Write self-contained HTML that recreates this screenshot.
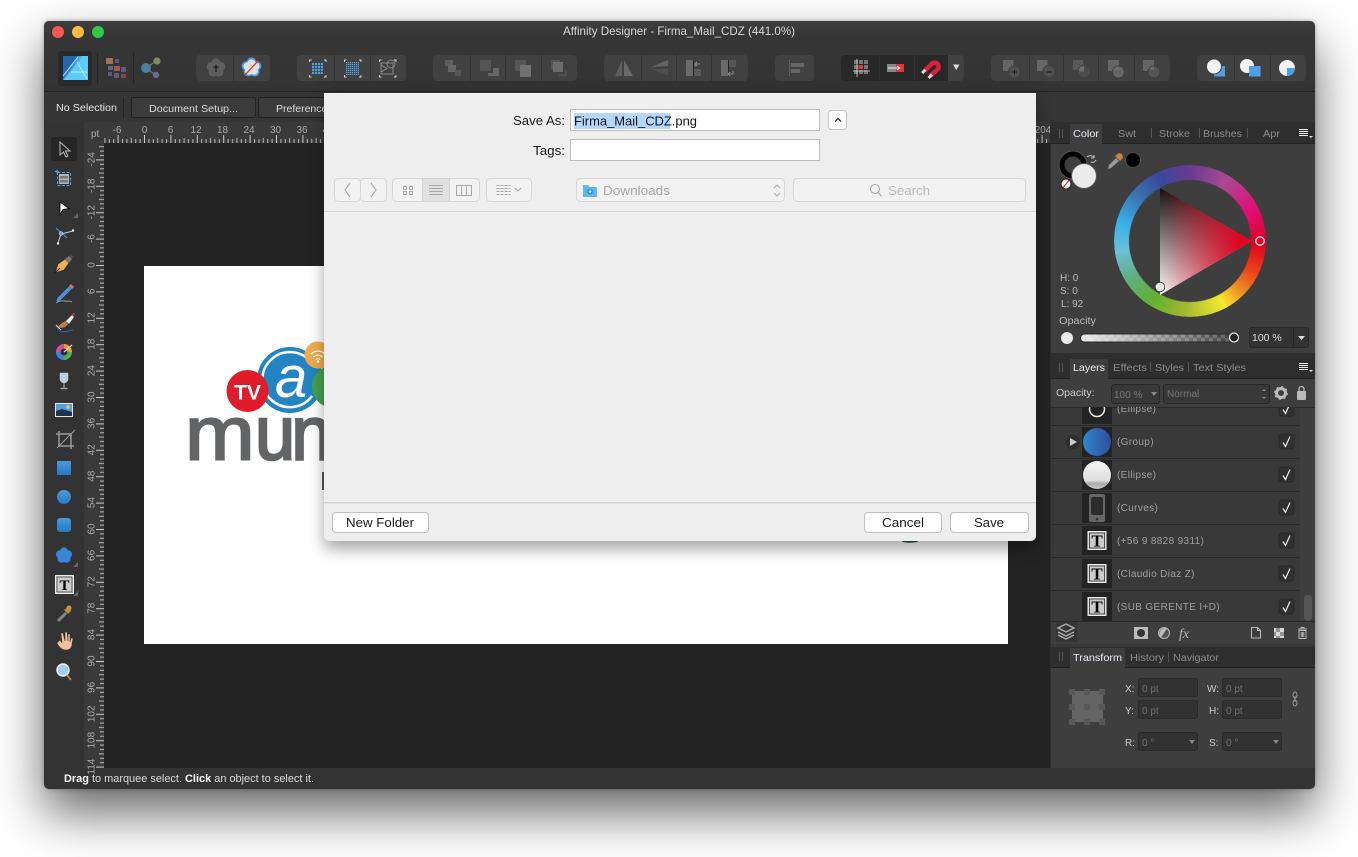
<!DOCTYPE html>
<html><head><meta charset="utf-8"><title>Affinity Designer</title>
<style>
html,body{margin:0;padding:0;background:#fff;width:1358px;height:857px;overflow:hidden}
#shadow{position:absolute;left:44px;top:21px;width:1271px;height:768px;border-radius:5px;box-shadow:0 24px 50px rgba(0,0,0,.6),0 0 5px rgba(0,0,0,.3)}
svg{position:absolute;left:0;top:0}
text{font-family:"Liberation Sans",sans-serif}
#wheel{position:absolute;left:1114px;top:165px;width:152px;height:152px;border-radius:50%;
background:conic-gradient(from 0deg,#6a3a90 0deg,#a84a92 30deg,#e0107a 62deg,#e3001e 92deg,#e8401a 115deg,#f09020 135deg,#f5e830 152deg,#a0b830 185deg,#62b030 212deg,#60b088 240deg,#6cc0d8 262deg,#38b0e8 285deg,#3a70b0 312deg,#38489a 335deg,#6a3a90 360deg);
-webkit-mask:radial-gradient(circle,transparent 60.5px,#000 61.5px);mask:radial-gradient(circle,transparent 60.5px,#000 61.5px)}
</style></head><body>
<div id="shadow"></div>
<svg width="1358" height="857" viewBox="0 0 1358 857" xmlns="http://www.w3.org/2000/svg">
<defs>
<pattern id="hr" x="144" y="135" width="26.4" height="8" patternUnits="userSpaceOnUse">
<rect x="0" y="0" width="1" height="8" fill="#ccc"/><rect x="4.4" y="4" width="1" height="4" fill="#bbb"/><rect x="8.8" y="4" width="1" height="4" fill="#bbb"/><rect x="13.2" y="3" width="1" height="5" fill="#bbb"/><rect x="17.6" y="4" width="1" height="4" fill="#bbb"/><rect x="22" y="4" width="1" height="4" fill="#bbb"/>
</pattern>
<pattern id="vr" x="96" y="265" width="8" height="26.4" patternUnits="userSpaceOnUse">
<rect x="0" y="0" width="8" height="1" fill="#ccc"/><rect x="4" y="4.4" width="4" height="1" fill="#bbb"/><rect x="4" y="8.8" width="4" height="1" fill="#bbb"/><rect x="3" y="13.2" width="5" height="1" fill="#bbb"/><rect x="4" y="17.6" width="4" height="1" fill="#bbb"/><rect x="4" y="22" width="4" height="1" fill="#bbb"/>
</pattern>
<pattern id="dots" x="0" y="0" width="3" height="3" patternUnits="userSpaceOnUse"><rect width="2.2" height="2.2" fill="#4ea0e6"/></pattern>
<pattern id="dots2" x="0" y="0" width="2" height="2" patternUnits="userSpaceOnUse"><rect width="1.3" height="1.3" fill="#4ea0e6"/></pattern>
<pattern id="chk" x="0" y="0" width="8" height="8" patternUnits="userSpaceOnUse"><rect width="8" height="8" fill="#fff"/><rect width="4" height="4" fill="#aaa"/><rect x="4" y="4" width="4" height="4" fill="#aaa"/></pattern>
<pattern id="chk2" x="1081" y="334" width="8" height="8" patternUnits="userSpaceOnUse"><rect width="8" height="8" fill="#626262"/><rect width="4" height="4" fill="#404040"/><rect x="4" y="4" width="4" height="4" fill="#404040"/></pattern>
<linearGradient id="tb" x1="0" y1="0" x2="0" y2="1"><stop offset="0" stop-color="#3e3e3e"/><stop offset=".2" stop-color="#363636"/><stop offset="1" stop-color="#333"/></linearGradient>
<linearGradient id="logoG" x1="0" y1="0" x2="1" y2="0"><stop offset="0" stop-color="#2a72ba"/><stop offset="1" stop-color="#5cc9f7"/></linearGradient>
<linearGradient id="blueV" x1="0" y1="0" x2="0" y2="1"><stop offset="0" stop-color="#4a98e0"/><stop offset="1" stop-color="#2a78c0"/></linearGradient>
<linearGradient id="grp" x1="0" y1="0" x2="1" y2="0"><stop offset="0" stop-color="#2d86cc"/><stop offset="1" stop-color="#2f4f9c"/></linearGradient>
<linearGradient id="ball" x1="0" y1="0" x2="0" y2="1"><stop offset="0" stop-color="#f6f6f6"/><stop offset=".7" stop-color="#ddd"/><stop offset=".8" stop-color="#aaa"/><stop offset="1" stop-color="#c8c8c8"/></linearGradient>
<linearGradient id="fade" x1="0" y1="0" x2="1" y2="0"><stop offset="0" stop-color="#fff" stop-opacity=".9"/><stop offset=".5" stop-color="#fff" stop-opacity=".45"/><stop offset="1" stop-color="#fff" stop-opacity="0"/></linearGradient>
<clipPath id="listclip"><rect x="1051" y="407" width="264" height="214"/></clipPath>
<clipPath id="win"><rect x="44" y="21" width="1271" height="768" rx="5"/></clipPath>
<clipPath id="leftclip"><rect x="144" y="266" width="180" height="378"/></clipPath>
<symbol id="flower" viewBox="-10 -10 20 20"><circle cx="0" cy="-5" r="4.6"/><circle cx="4.8" cy="-1.5" r="4.6"/><circle cx="3" cy="4" r="4.6"/><circle cx="-3" cy="4" r="4.6"/><circle cx="-4.8" cy="-1.5" r="4.6"/><circle r="5"/></symbol>
<g id="chkbox"><rect x="0" y="0" width="15" height="15" rx="3" fill="#303030" stroke="#292929"/><path d="M4 8.500l2.500 4L11 2.500" fill="none" stroke="#eee" stroke-width="1.200"/></g>
<g id="Tico"><rect x="0" y="0" width="30" height="29" fill="#232323"/><rect x="6" y="5.500" width="18" height="18" fill="#ccc" stroke="#eee"/><rect x="7.500" y="7" width="15" height="15" fill="#ccc" stroke="#333" stroke-width=".8"/><text x="15" y="20.500" font-size="17" font-weight="bold" text-anchor="middle" fill="#000" style="font-family:'Liberation Serif',serif">T</text></g>
</defs>

<g clip-path="url(#win)">
<!-- chrome -->
<rect x="44" y="21" width="1271" height="768" fill="#333"/>
<rect x="44" y="21" width="1271" height="71" fill="url(#tb)"/>
<rect x="44" y="91" width="1271" height="1" fill="#252525"/>
<rect x="44" y="92" width="1271" height="30" fill="#353535"/>
<rect x="44" y="122" width="40" height="646" fill="#333"/>
<rect x="84" y="122" width="966" height="21" fill="#3a3a3a"/>
<rect x="84" y="143" width="20" height="625" fill="#3a3a3a"/>
<rect x="104" y="143" width="946" height="625" fill="#232323"/>
<rect x="44" y="768" width="1271" height="21" fill="#333"/>

<!-- traffic lights -->
<circle cx="58" cy="32" r="6" fill="#fc5753"/><circle cx="78" cy="32" r="6" fill="#fdbc40"/><circle cx="98" cy="32" r="6" fill="#33c748"/>
<text x="563" y="35" font-size="12" fill="#d8d8d8" textLength="232" lengthAdjust="spacingAndGlyphs">Affinity Designer - Firma_Mail_CDZ (441.0%)</text>

<!-- logo + persona -->
<rect x="58" y="51" width="34" height="35" rx="3" fill="#292929"/>
<rect x="63" y="56" width="25" height="24" fill="url(#logoG)"/>
<polygon points="63,56 78,56 63,74" fill="#2467ad"/>
<polygon points="63,80 88,80 88,56 83,56" fill="#5ccbf8"/>
<path d="M63 76L78 57M71 72H87M77 62L87 79" stroke="#b8ecff" stroke-width=".9" fill="none"/>
<rect x="97" y="53" width="1" height="31" fill="#252525"/>
<rect x="106" y="58" width="7" height="6" fill="#a5714f"/><rect x="115" y="59" width="4" height="4" fill="#5d5a82"/>
<rect x="108" y="66" width="5" height="4" fill="#6a5f80"/><rect x="114" y="66" width="6" height="5" fill="#a05a4c"/><rect x="121" y="67" width="5" height="5" fill="#5d5a82"/>
<rect x="114" y="73" width="5" height="5" fill="#5d5a82"/><rect x="121" y="74" width="5" height="4" fill="#8a4048"/><rect x="108" y="72" width="4" height="4" fill="#5d5a82"/>
<rect x="133" y="53" width="1" height="31" fill="#252525"/>
<path d="M145 68L157 61M145 68L156 75" stroke="#777" stroke-width="1.3"/>
<circle cx="146" cy="68" r="5" fill="#4f7f9f"/><circle cx="157" cy="61" r="3.6" fill="#7a8f55"/><circle cx="156" cy="75" r="3.2" fill="#6a6a9a"/>

<!-- button groups -->
<g fill="#414141">
<rect x="196" y="55" width="74" height="26" rx="4"/>
<rect x="297" y="55" width="109" height="26" rx="4"/>
<rect x="433" y="55" width="144" height="26" rx="4"/>
<rect x="604" y="55" width="144" height="26" rx="4"/>
<rect x="775" y="55" width="39" height="26" rx="4"/>
<rect x="991" y="55" width="179" height="26" rx="4"/>
<rect x="1197" y="55" width="109" height="26" rx="4"/>
</g>
<rect x="841" y="55" width="123" height="26" rx="4" fill="#282828"/>
<path d="M948 55h12a4 4 0 0 1 4 4v18a4 4 0 0 1-4 4h-12z" fill="#414141"/>
<g fill="#333">
<rect x="233" y="55" width="1" height="26"/><rect x="334" y="55" width="1" height="26"/><rect x="370" y="55" width="1" height="26"/>
<rect x="470" y="55" width="1" height="26"/><rect x="505" y="55" width="1" height="26"/><rect x="541" y="55" width="1" height="26"/>
<rect x="641" y="55" width="1" height="26"/><rect x="676" y="55" width="1" height="26"/><rect x="711" y="55" width="1" height="26"/>
<rect x="879" y="55" width="1" height="26"/><rect x="914" y="55" width="1" height="26"/>
<rect x="1029" y="55" width="1" height="26"/><rect x="1063" y="55" width="1" height="26"/><rect x="1098" y="55" width="1" height="26"/><rect x="1134" y="55" width="1" height="26"/>
<rect x="1234" y="55" width="1" height="26"/><rect x="1270" y="55" width="1" height="26"/>
</g>
<!-- flower buttons -->
<use href="#flower" x="206" y="58" width="20" height="20" fill="#5e5e5e"/>
<path d="M216 64l-3 4h2v4h2v-4h2z" fill="#2e2e2e"/>
<use href="#flower" x="241" y="57" width="21" height="21" fill="#4a9be0"/>
<use href="#flower" x="243" y="59" width="17" height="17" fill="#e0e0e0"/>
<path d="M245 75L258 61" stroke="#e33" stroke-width="1.300"/>
<!-- frames -->
<g fill="none" stroke="#ddd" stroke-width=".9">
<path d="M309.500 62v-2h2M324 60h2v2M326 75v2h-2M311.500 77h-2v-2"/>
<path d="M344.500 62v-2h2M359 60h2v2M361 75v2h-2M346.500 77h-2v-2"/>
<path d="M379.500 62v-2h2M394 60h2v2M396 75v2h-2M381.500 77h-2v-2"/>
</g>
<rect x="312" y="63" width="11" height="11" fill="url(#dots)"/>
<rect x="346" y="62" width="13" height="13" fill="url(#dots2)"/>
<g fill="none" stroke="#888" stroke-width="1"><circle cx="391" cy="64" r="4"/><rect x="381" y="63" width="12" height="11"/><path d="M381 65v7l6-3.500z"/></g>
<!-- dim icons -->
<g fill="#5c5c5c">
<rect x="445" y="60" width="8" height="6"/><rect x="448" y="65" width="8" height="7" fill="#666"/><rect x="455" y="70" width="6" height="6" fill="#555"/>
<rect x="480" y="60" width="11" height="11" fill="#555"/><path d="M493 68h6v8h-11v-3h5z" fill="#666"/>
<rect x="515" y="60" width="11" height="11" fill="#555"/><rect x="520" y="65" width="11" height="12" fill="#707070"/>
<path d="M551 60h9v2h-7v8h-2z" fill="#555"/><rect x="553" y="62" width="10" height="10" fill="#6c6c6c"/><path d="M565 70h2v6h-8v-2h6z" fill="#4d4d4d"/>
<polygon points="615,76 622,60 622,76" fill="#5e5e5e"/><polygon points="624,60 624,76 633,76" fill="#6a6a6a"/>
<polygon points="651,67 668,60 668,66" fill="#646464"/><polygon points="651,69 668,69 668,76" fill="#4f4f4f"/>
<rect x="686" y="60" width="7" height="16" fill="#6a6a6a"/><rect x="694" y="69" width="7" height="7" fill="#5a5a5a"/><rect x="693" y="60" width="1" height="16" fill="#222"/>
<rect x="721" y="60" width="7" height="16" fill="#6a6a6a"/><rect x="729" y="60" width="7" height="7" fill="#555"/><rect x="728" y="60" width="1" height="16" fill="#222"/>
<rect x="789" y="60" width="1" height="16" fill="#5c5c5c"/><rect x="791" y="63" width="13" height="4" fill="#666"/><rect x="791" y="69" width="9" height="4" fill="#666"/>
</g>
<path d="M695 67v-3h5M697 62l-2 2 2 2" fill="none" stroke="#8a8a8a"/>
<path d="M733 71v3h-5M730 72l-2 2 2 2" fill="none" stroke="#8a8a8a"/>
<!-- snapping -->
<g fill="#777"><rect x="854" y="60" width="4" height="4"/><rect x="859" y="60" width="4" height="4"/><rect x="864" y="60" width="4" height="4"/><rect x="854" y="65" width="4" height="4"/><rect x="864" y="65" width="4" height="4"/><rect x="854" y="70" width="4" height="4"/><rect x="859" y="70" width="4" height="4"/><rect x="864" y="70" width="4" height="4"/></g>
<rect x="858.500" y="65" width="4.500" height="4" fill="#e8323c"/>
<path d="M853 71h17M857 59v18" stroke="#ccc" stroke-width=".8"/>
<rect x="887" y="64" width="9" height="8" fill="#888"/><rect x="896" y="64" width="8" height="8" fill="#e8323c"/><path d="M888 68h11m-2-2l3 2-3 2" stroke="#eee" fill="none"/>
<path d="M924.500 71L932 63.500a3.600 3.600 0 0 1 5 6.500L930 76" fill="none" stroke="#dc2040" stroke-width="4.500"/>
<rect x="921.500" y="70" width="4.500" height="3" fill="#ddd" transform="rotate(-45 923.700 71.500)"/><rect x="928" y="75" width="4.500" height="3" fill="#ddd" transform="rotate(-45 930 76.500)"/>
<polygon points="953,64.500 959.500,64.500 956.200,70" fill="#ddd"/>
<!-- booleans -->
<g fill="#666">
<rect x="1003" y="60" width="10.500" height="11"/>
<rect x="1037" y="60" width="10.500" height="11"/>
<rect x="1073" y="60" width="10" height="10" fill="#5a5a5a"/>
<rect x="1108" y="60" width="11" height="11"/>
<rect x="1143" y="60" width="11" height="11"/>
</g>
<g stroke="#414141" stroke-width="1.200"><circle cx="1014.500" cy="72" r="6" fill="#505050"/><circle cx="1049" cy="71.500" r="6" fill="#505050"/><circle cx="1084" cy="71.500" r="6" fill="#4c4c4c"/><circle cx="1118.500" cy="72" r="6" fill="#666"/><circle cx="1154" cy="72" r="6" fill="#555"/></g>
<path d="M1012 71.500h5v1h-5zM1014 70h1v4h-1zM1046.500 71.500h5v1h-5z" fill="#111"/>
<path d="M1084 71.500v-5.500a5.500 5.500 0 0 0-5 3v2.500zM1118.500 66.500a5.500 5.500 0 0 0-5 3h5zM1154 66.500a5.500 5.500 0 0 0-5 3h5z" fill="#707070" stroke="none"/>
<rect x="1214" y="66" width="11" height="10.500" fill="#4ea0e6"/><circle cx="1214" cy="66.500" r="7.500" fill="#f2f2f2" stroke="#414141"/>
<circle cx="1247" cy="66" r="7" fill="#f2f2f2"/><rect x="1249" y="66" width="11.500" height="10.500" fill="#4ea0e6"/>
<circle cx="1287" cy="68" r="8" fill="#f2f2f2"/><path d="M1287 68h8a8 8 0 0 1-8 8z" fill="#4ea0e6"/>

<!-- context bar -->
<text x="56" y="111" font-size="10.500" fill="#e8e8e8" textLength="61" lengthAdjust="spacingAndGlyphs">No Selection</text>
<rect x="123" y="98" width="1" height="20" fill="#262626"/>
<rect x="131.500" y="97.500" width="124" height="20" rx="2" fill="#3b3b3b" stroke="#222"/>
<rect x="258.500" y="97.500" width="100" height="20" rx="2" fill="#3b3b3b" stroke="#222"/>
<text x="149" y="112" font-size="10.500" fill="#ddd" textLength="89" lengthAdjust="spacingAndGlyphs">Document Setup...</text>
<text x="276" y="112" font-size="10.500" fill="#ddd">Preferences</text>

<!-- rulers -->
<rect x="104" y="135" width="946" height="8" fill="url(#hr)"/>
<rect x="96" y="143" width="8" height="625" fill="url(#vr)"/>
<text x="91" y="137" font-size="10" fill="#aaa">pt</text>
<g font-size="10" fill="#aaa" text-anchor="middle">
<text x="117" y="133">-6</text><text x="144.500" y="133">0</text><text x="170.500" y="133">6</text><text x="196" y="133">12</text><text x="222.500" y="133">18</text><text x="249" y="133">24</text><text x="275.500" y="133">30</text><text x="302" y="133">36</text><text x="328" y="133">42</text><text x="1043" y="133">204</text>
<text transform="translate(94.500,159.400) rotate(-90)">-24</text><text transform="translate(94.500,185.800) rotate(-90)">-18</text><text transform="translate(94.500,212.200) rotate(-90)">-12</text><text transform="translate(94.500,238.600) rotate(-90)">-6</text><text transform="translate(94.500,265) rotate(-90)">0</text><text transform="translate(94.500,291.400) rotate(-90)">6</text><text transform="translate(94.500,317.800) rotate(-90)">12</text><text transform="translate(94.500,344.200) rotate(-90)">18</text><text transform="translate(94.500,370.600) rotate(-90)">24</text><text transform="translate(94.500,397) rotate(-90)">30</text><text transform="translate(94.500,423.400) rotate(-90)">36</text><text transform="translate(94.500,449.800) rotate(-90)">42</text><text transform="translate(94.500,476.200) rotate(-90)">48</text><text transform="translate(94.500,502.600) rotate(-90)">54</text><text transform="translate(94.500,529) rotate(-90)">60</text><text transform="translate(94.500,555.400) rotate(-90)">66</text><text transform="translate(94.500,581.800) rotate(-90)">72</text><text transform="translate(94.500,608.200) rotate(-90)">78</text><text transform="translate(94.500,634.600) rotate(-90)">84</text><text transform="translate(94.500,661) rotate(-90)">90</text><text transform="translate(94.500,687.400) rotate(-90)">96</text><text transform="translate(94.500,713.800) rotate(-90)">102</text><text transform="translate(94.500,740.200) rotate(-90)">108</text><text transform="translate(94.500,766.600) rotate(-90)">114</text>
</g>

<!-- artboard -->
<rect x="144" y="266" width="864" height="378" fill="#fff"/>
<g clip-path="url(#leftclip)">
<circle cx="290" cy="380" r="33" fill="#2284c2"/>
<path d="M312 396A27.500 27.500 0 1 1 311 362" fill="none" stroke="#fff" stroke-width="2.500"/>
<text x="275" y="397" font-size="58" font-style="italic" fill="#fff">a</text>
<circle cx="318" cy="355" r="13.500" fill="#f0ad4e"/>
<path d="M311 354a10 10 0 0 1 14 0M313.500 357a6.500 6.500 0 0 1 9 0M316 359.500a3 3 0 0 1 4 0" stroke="#fff" stroke-width="1.300" fill="none"/><circle cx="318" cy="361.500" r="1.300" fill="#fff"/>
<circle cx="333.500" cy="386.500" r="21.500" fill="#43a350"/>
<circle cx="247.500" cy="391" r="21" fill="#e01b2a"/>
<text x="247.500" y="399.500" font-size="21" font-weight="bold" fill="#fff" text-anchor="middle">TV</text>
<text transform="translate(185,459.500) scale(1.100,1)" font-size="76" fill="#636466" stroke="#636466" stroke-width="2">m</text>
<text transform="translate(255,459.500) scale(.95,1)" font-size="76" letter-spacing="-4" fill="#636466" stroke="#636466" stroke-width="2.400">un</text>
<rect x="322" y="472" width="3" height="18" fill="#555"/>
</g>
<ellipse cx="910" cy="541" rx="8" ry="1.800" fill="#2a5a3a"/>

<!-- tools -->
<rect x="51" y="137" width="26" height="24" rx="3" fill="#262626"/>
<path d="M60 142v13l3.500-3 2.500 5 2-1-2.500-5h4.500z" fill="#2a2a2a" stroke="#bbb"/>
<rect x="57.500" y="172.500" width="13" height="13" fill="none" stroke="#4ea0e6" stroke-dasharray="3 1.500"/><rect x="59" y="174" width="10" height="10" fill="#b4b4b4"/><rect x="60" y="176" width="8" height="2.500" fill="#777"/><rect x="60" y="180" width="8" height="2.500" fill="#777"/><path d="M57 169.500v4M55 171.500h4" stroke="#4ea0e6"/>
<path d="M60 202v12.500l3-5 6-1z" fill="#fff" stroke="#000" stroke-width=".8"/><polygon points="78,213 73,218 78,218" fill="#666"/>
<path d="M61 234l12-3M61 234l-3 9" stroke="#ccc" fill="none"/><path d="M56 228l11 10" stroke="#4ea0e6"/><circle cx="61" cy="233.500" r="1.800" fill="#4ea0e6" stroke="#ddd" stroke-width=".6"/>
<circle cx="73" cy="230.500" r="1.200" fill="#eee"/><circle cx="58" cy="243.500" r="1.200" fill="#eee"/>
<path d="M55 273l3-9 7-5 4 4-5 7z" fill="#f0b050" stroke="#222" stroke-width=".6"/><path d="M65 259l4-3 3 3-3 4z" fill="#777"/><path d="M70 256l2-1 1 2-2 1z" fill="#8a3a2a"/><path d="M55 273l5-5" stroke="#222"/>
<path d="M57 298l12-12 3 3-12 12-4 1z" fill="#4a8fd8" stroke="#222" stroke-width=".5"/><path d="M69 286l2-2 3 3-2 2z" fill="#e07070"/><path d="M56 303c4-3 7-2 9-2 3 1 5-1 7 1" stroke="#999" fill="none"/>
<path d="M58 327c2-3 5-5 8-6l2 3c-2 3-5 5-10 3z" fill="#c08040"/><path d="M66 321l6-6 2 2-5 7z" fill="#e8e8e8"/><path d="M71 316l3-4 1 3z" fill="#d83030"/><path d="M56 326l4 5c3 2 8 0 13-1" stroke="#2a68a8" fill="none"/><path d="M56 325l5 5" stroke="#ddd"/>
<circle cx="64" cy="352" r="8" fill="#d050a0"/><path d="M64 344a8 8 0 0 1 8 8h-8z" fill="#e0a030"/><path d="M64 352h8a8 8 0 0 1-8 8z" fill="#50b050"/><path d="M64 352v8a8 8 0 0 1-8-8z" fill="#4080e0"/><circle cx="64" cy="352" r="3.500" fill="#333"/><path d="M64 352l8-7" stroke="#ddd" stroke-width="1.300"/>
<path d="M60 373h8v6a4 4 0 0 1-8 0z" fill="#bcd0e0" stroke="#ccc" stroke-width=".5"/><path d="M64 383v5M60.500 388.500h7" stroke="#aaa" stroke-width="1.200"/>
<rect x="55" y="403" width="18" height="14" fill="#dfe8f0"/><rect x="56" y="404" width="16" height="12" fill="#5a9cd8"/><circle cx="68" cy="407" r="1.800" fill="#f0c040"/><path d="M56 411l6-2 10 3v4H56z" fill="#20304a"/>
<g fill="none" stroke="#9a9a9a" stroke-width="1.500"><path d="M59 431v15h15M56 434h15v15"/><path d="M57 448l18-18" stroke-width="1"/></g>
<rect x="57" y="461" width="14" height="14" fill="url(#blueV)"/>
<circle cx="64" cy="497" r="7" fill="url(#blueV)"/>
<rect x="57" y="518" width="14" height="14" rx="3" fill="url(#blueV)"/>
<use href="#flower" x="55" y="547" width="18" height="17" fill="#3a88d8"/><polygon points="78,562 73,567 78,567" fill="#666"/>
<g transform="translate(55,575)"><rect x=".500" y=".500" width="18" height="18" fill="#ccc" stroke="#eee"/><rect x="2" y="2" width="15" height="15" fill="#ccc" stroke="#333" stroke-width=".7"/><text x="9.500" y="15" font-size="15" font-weight="bold" text-anchor="middle" fill="#000" style="font-family:'Liberation Serif',serif">T</text></g>
<polygon points="78,591 73,596 78,596" fill="#666"/>
<path d="M57 620l8-8 2 2-8 8z" fill="#888"/><path d="M64 610l4 4 3-3-1-3-2-1z" fill="#c08838"/><circle cx="69" cy="608" r="2.500" fill="#d09840"/>
<path d="M57 643c2 4 5 7 9 7s6-3 6-6l1-6h-2l-1 4v-8h-2v7l-1-9h-2v9l-2-8h-2l1 10-2-3z" fill="#f0c0a0" stroke="#222" stroke-width=".4"/>
<circle cx="63" cy="670" r="6" fill="#9fd0f0" stroke="#eee" stroke-width="1.500"/><path d="M67 675l4 5" stroke="#c88838" stroke-width="1.800"/>

<!-- status -->
<text x="64" y="782" font-size="11" fill="#ddd" textLength="250" lengthAdjust="spacingAndGlyphs"><tspan font-weight="bold" fill="#fff">Drag</tspan> to marquee select. <tspan font-weight="bold" fill="#fff">Click</tspan> an object to select it.</text>

<!-- RIGHT PANELS -->
<rect x="1050" y="122" width="265" height="646" fill="#2e2e2e"/>
<!-- color -->
<rect x="1051" y="144" width="264" height="209" fill="#3e3e3e"/>
<rect x="1051" y="143" width="264" height="1" fill="#222"/>
<rect x="1070" y="124" width="32" height="20" fill="#3e3e3e"/>
<rect x="1059" y="129" width="1" height="9" fill="#555"/><rect x="1062" y="129" width="1" height="9" fill="#555"/>
<g font-size="10.500" fill="#8c8c8c">
<text x="1073" y="137" fill="#e8eef5" textLength="26" lengthAdjust="spacingAndGlyphs">Color</text>
<text x="1118" y="137" textLength="18" lengthAdjust="spacingAndGlyphs">Swt</text><text x="1159" y="137" textLength="31" lengthAdjust="spacingAndGlyphs">Stroke</text><text x="1203" y="137" textLength="39" lengthAdjust="spacingAndGlyphs">Brushes</text><text x="1263" y="137" textLength="17" lengthAdjust="spacingAndGlyphs">Apr</text>
</g>
<g fill="#555"><rect x="1151" y="128" width="1" height="10"/><rect x="1199" y="128" width="1" height="10"/><rect x="1247" y="128" width="1" height="10"/></g>
<path d="M1299 129.500h9M1299 131.500h9M1299 133.500h9M1299 135.500h9" stroke="#eee" stroke-width="1"/><polygon points="1309,136 1313,136 1311,138" fill="#eee"/>

<circle cx="1073" cy="165" r="11" fill="none" stroke="#000" stroke-width="5"/>
<circle cx="1073" cy="165" r="14" fill="none" stroke="#555" stroke-width=".7"/>
<circle cx="1084" cy="176" r="12.500" fill="#ebebeb" stroke="#555" stroke-width="1"/>
<circle cx="1066" cy="184" r="5" fill="#fff" stroke="#222"/><path d="M1063 187.500l6-7" stroke="#e33" stroke-width="1.300"/>
<path d="M1087 157c2-2 5-2 7 1M1094 158v-3m0 3h-3M1096 160c-1 2-3 3-5 2" fill="none" stroke="#bbb"/>
<path d="M1109 165l7-7 3 3-8 7-3 1z" fill="#999"/><path d="M1115 156l5 5 3-3-1-4-3-1z" fill="#c08838"/>
<circle cx="1133" cy="160" r="7.500" fill="#000" stroke="#4a4a4a"/>
<g font-size="10" fill="#bbb"><text x="1060" y="281">H: 0</text><text x="1060" y="294">S: 0</text><text x="1061" y="307">L: 92</text><text x="1059" y="324" textLength="37" lengthAdjust="spacingAndGlyphs">Opacity</text></g>
<circle cx="1067" cy="338" r="6" fill="#ebebeb"/>
<rect x="1080" y="333.500" width="154" height="9" rx="4.500" fill="#2a2a2a"/>
<rect x="1081" y="334.500" width="152" height="7" rx="3.500" fill="url(#chk2)"/>
<rect x="1081" y="334.500" width="152" height="7" rx="3.500" fill="url(#fade)"/>
<circle cx="1234" cy="337.500" r="4.500" fill="#222" stroke="#eee" stroke-width="1.200"/>
<rect x="1249.500" y="327.500" width="59" height="20" rx="2" fill="#333" stroke="#2a2a2a"/><rect x="1293" y="328" width="1" height="19" fill="#262626"/>
<text x="1252" y="341" font-size="10.500" fill="#ddd">100 %</text><polygon points="1298,336 1305,336 1301.500,340" fill="#ddd"/>

<!-- layers -->
<rect x="1051" y="378" width="264" height="29" fill="#3e3e3e"/>
<rect x="1051" y="378" width="264" height="1" fill="#222"/>
<rect x="1051" y="407" width="249" height="214" fill="#393939"/>
<rect x="1300" y="407" width="15" height="214" fill="#3e3e3e"/>
<rect x="1051" y="407" width="264" height="1" fill="#2a2a2a"/>
<rect x="1070" y="359" width="38" height="20" fill="#3e3e3e"/>
<rect x="1059" y="363" width="1" height="9" fill="#555"/><rect x="1062" y="363" width="1" height="9" fill="#555"/>
<g font-size="10.500" fill="#8c8c8c"><text x="1073" y="371" fill="#e8eef5" textLength="32" lengthAdjust="spacingAndGlyphs">Layers</text><text x="1113" y="371" textLength="34" lengthAdjust="spacingAndGlyphs">Effects</text><text x="1155" y="371" textLength="29" lengthAdjust="spacingAndGlyphs">Styles</text><text x="1193" y="371" textLength="53" lengthAdjust="spacingAndGlyphs">Text Styles</text></g>
<g fill="#555"><rect x="1150" y="362" width="1" height="10"/><rect x="1188" y="362" width="1" height="10"/></g>
<path d="M1299 363.500h9M1299 365.500h9M1299 367.500h9M1299 369.500h9" stroke="#eee" stroke-width="1"/><polygon points="1309,370 1313,370 1311,372" fill="#eee"/>
<text x="1056" y="396" font-size="10.500" fill="#ccc">Opacity:</text>
<rect x="1111.500" y="384.500" width="48" height="19" rx="3" fill="#383838" stroke="#272727"/><text x="1114" y="398" font-size="10" fill="#777">100 %</text><polygon points="1151,392 1157,392 1154,396" fill="#888"/>
<rect x="1163.500" y="384.500" width="106" height="19" rx="3" fill="#383838" stroke="#272727"/><text x="1167" y="397" font-size="10" fill="#777">Normal</text><path d="M1262 391l2-2 2 2M1262 397l2 2 2-2" fill="#888"/>
<circle cx="1281" cy="393" r="4.500" fill="none" stroke="#bbb" stroke-width="3"/><circle cx="1281" cy="393" r="6" fill="none" stroke="#bbb" stroke-width="1.800" stroke-dasharray="2 2.700"/>
<rect x="1297" y="391" width="9" height="9" rx="1" fill="#bbb"/><path d="M1299 391v-2a2.500 2.500 0 0 1 5 0v2" fill="none" stroke="#bbb" stroke-width="1.300"/>

<g clip-path="url(#listclip)">
<g fill="#2a2a2a"><rect x="1051" y="425" width="249" height="1"/><rect x="1051" y="458" width="249" height="1"/><rect x="1051" y="491" width="249" height="1"/><rect x="1051" y="524" width="249" height="1"/><rect x="1051" y="557" width="249" height="1"/><rect x="1051" y="590" width="249" height="1"/></g>
<g font-size="10" fill="#a0a0a0" letter-spacing=".35"><text x="1117" y="412">(Ellipse)</text><text x="1117" y="445">(Group)</text><text x="1117" y="478">(Ellipse)</text><text x="1117" y="511">(Curves)</text><text x="1117" y="544">(+56 9 8828 9311)</text><text x="1117" y="577">(Claudio Diaz Z)</text><text x="1117" y="610">(SUB GERENTE I+D)</text></g>
<rect x="1082" y="395" width="30" height="29" fill="#232323"/><circle cx="1097" cy="409" r="7.500" fill="none" stroke="#eee" stroke-width="1.500"/>
<rect x="1082" y="427" width="30" height="30" fill="#232323"/><circle cx="1097" cy="442" r="14" fill="url(#grp)"/>
<circle cx="1073" cy="442" r="7" fill="#2e2e2e"/><polygon points="1070,438 1070,446 1077,442" fill="#ccc"/>
<rect x="1082" y="460" width="30" height="30" fill="#232323"/><circle cx="1097" cy="475" r="14" fill="url(#ball)"/>
<rect x="1082" y="493" width="30" height="30" fill="#232323"/><rect x="1089" y="494" width="16" height="28" rx="2" fill="#666"/><rect x="1091" y="497" width="12" height="18" rx="2" fill="#2c2c2c"/><circle cx="1097" cy="519" r="1.300" fill="#2c2c2c"/>
<use href="#Tico" x="1082" y="526"/><use href="#Tico" x="1082" y="559"/><use href="#Tico" x="1082" y="592"/>
<use href="#chkbox" x="1279" y="401"/><use href="#chkbox" x="1279" y="434"/><use href="#chkbox" x="1279" y="467"/><use href="#chkbox" x="1279" y="500"/><use href="#chkbox" x="1279" y="533"/><use href="#chkbox" x="1279" y="566"/><use href="#chkbox" x="1279" y="599"/>
<rect x="1304" y="595" width="8" height="26" rx="4" fill="#555"/>
</g>
<rect x="1051" y="621" width="264" height="23" fill="#3e3e3e"/>
<rect x="1051" y="621" width="264" height="1" fill="#2a2a2a"/>
<rect x="1056" y="622" width="21" height="20" fill="#353535"/>
<path d="M1058 628l8-4 8 4-8 4zM1058 632l8 4 8-4M1058 635l8 4 8-4" fill="none" stroke="#b0b0b0" stroke-width="1.400"/>
<rect x="1134" y="627" width="14" height="12" fill="#bbb"/><circle cx="1141" cy="633" r="4" fill="#333"/>
<circle cx="1164" cy="633" r="5.500" fill="#555" stroke="#bbb"/><path d="M1167 628.500a5.500 5.500 0 0 0-6 9z" fill="#bbb"/>
<text x="1179" y="638" font-size="14" font-style="italic" fill="#bbb" style="font-family:'Liberation Serif',serif">fx</text>
<path d="M1251.500 627.500h6l3 3v7.500h-9zM1257.500 627.500v3h3" fill="none" stroke="#bbb"/>
<rect x="1274" y="628" width="10" height="10" fill="url(#chk)" opacity=".8"/>
<path d="M1298 629h9M1301 629v-1.500h3v1.500M1299 630.500h7v8h-7zM1301.200 632v5M1302.500 632v5M1303.800 632v5" fill="none" stroke="#bbb" stroke-width=".9"/>

<!-- transform -->
<rect x="1051" y="667" width="264" height="101" fill="#3e3e3e"/>
<rect x="1051" y="667" width="264" height="1" fill="#222"/>
<rect x="1051" y="644" width="264" height="3" fill="#383838"/>
<rect x="1070" y="648" width="55" height="20" fill="#3e3e3e"/>
<rect x="1059" y="652" width="1" height="9" fill="#555"/><rect x="1062" y="652" width="1" height="9" fill="#555"/>
<g font-size="10.500" fill="#8c8c8c"><text x="1073" y="661" fill="#e8eef5" textLength="49" lengthAdjust="spacingAndGlyphs">Transform</text><text x="1130" y="661" textLength="34" lengthAdjust="spacingAndGlyphs">History</text><text x="1173" y="661" textLength="46" lengthAdjust="spacingAndGlyphs">Navigator</text></g>
<rect x="1168" y="652" width="1" height="10" fill="#555"/>
<rect x="1072" y="691" width="31" height="31" fill="#646464"/>
<g fill="#585858"><rect x="1069" y="689" width="6" height="6"/><rect x="1084" y="689" width="6" height="6"/><rect x="1099" y="689" width="6" height="6"/><rect x="1069" y="704" width="6" height="6"/><rect x="1084" y="704" width="6" height="6"/><rect x="1099" y="704" width="6" height="6"/><rect x="1069" y="719" width="6" height="6"/><rect x="1084" y="719" width="6" height="6"/><rect x="1099" y="719" width="6" height="6"/></g>
<g fill="#323232" stroke="#2a2a2a"><rect x="1138.500" y="678.500" width="59" height="18" rx="2"/><rect x="1222.500" y="678.500" width="59" height="18" rx="2"/><rect x="1138.500" y="700.500" width="59" height="18" rx="2"/><rect x="1222.500" y="700.500" width="59" height="18" rx="2"/><rect x="1138.500" y="732.500" width="59" height="18" rx="2"/><rect x="1222.500" y="732.500" width="59" height="18" rx="2"/></g>
<g font-size="10" fill="#ccc"><text x="1125" y="692">X:</text><text x="1207" y="692">W:</text><text x="1125" y="714">Y:</text><text x="1209" y="714">H:</text><text x="1125" y="746">R:</text><text x="1209" y="746">S:</text></g>
<g font-size="10" fill="#707070"><text x="1142" y="692">0 pt</text><text x="1226" y="692">0 pt</text><text x="1142" y="714">0 pt</text><text x="1226" y="714">0 pt</text><text x="1142" y="746">0 °</text><text x="1226" y="746">0 °</text></g>
<polygon points="1189,740 1195,740 1192,744" fill="#888"/><polygon points="1273,740 1279,740 1276,744" fill="#888"/>
<path d="M1295 696v6" stroke="#999"/><ellipse cx="1295" cy="695" rx="2" ry="3" fill="none" stroke="#999"/><ellipse cx="1295" cy="703" rx="2" ry="3" fill="none" stroke="#999"/>
</g>

<!-- DIALOG -->
<rect x="324" y="88" width="712" height="453" rx="5" fill="#000" opacity=".35" style="filter:blur(8px)" transform="translate(0,8)"/>
<path d="M324 93h712v443a5 5 0 0 1-5 5H329a5 5 0 0 1-5-5z" fill="#eeeeee"/>
<rect x="324" y="93" width="712" height="1" fill="#f6f6f6"/>
<g font-size="13" fill="#1a1a1a">
<text x="513" y="125" textLength="52" lengthAdjust="spacingAndGlyphs">Save As:</text>
<text x="533" y="155" textLength="32" lengthAdjust="spacingAndGlyphs">Tags:</text>
</g>
<rect x="570.500" y="109.500" width="249" height="21" fill="#fff" stroke="#bdbdbd"/>
<rect x="574" y="113" width="96" height="16" fill="#b3d7ff"/>
<text x="574" y="125.500" font-size="13" fill="#111" textLength="123" lengthAdjust="spacingAndGlyphs">Firma_Mail_CDZ.png</text>
<rect x="828.500" y="110.500" width="18" height="19" rx="3" fill="#fff" stroke="#c4c4c4"/>
<path d="M835 121.500l3-3 3 3" fill="none" stroke="#333" stroke-width="1.300"/>
<rect x="570.500" y="139.500" width="249" height="21" fill="#fff" stroke="#bdbdbd"/>
<g fill="#f2f2f2" stroke="#d6d6d6">
<rect x="334.500" y="178.500" width="26" height="23" rx="4"/><rect x="360.500" y="178.500" width="26" height="23" rx="4"/>
<rect x="392.500" y="178.500" width="87" height="23" rx="4"/>
<rect x="486.500" y="178.500" width="45" height="23" rx="4"/>
<rect x="576.500" y="178.500" width="208" height="23" rx="4"/>
<rect x="793.500" y="178.500" width="232" height="23" rx="4"/>
</g>
<rect x="422" y="179" width="27" height="22" fill="#e0e0e0"/>
<path d="M422.500 179v22M449.500 179v22" stroke="#d6d6d6"/>
<path d="M350 183l-5 7 5 7M371 183l5 7-5 7" fill="none" stroke="#aaa" stroke-width="1.100"/>
<g fill="none" stroke="#a8a8a8"><rect x="403.500" y="186.500" width="3" height="3"/><rect x="409.500" y="186.500" width="3" height="3"/><rect x="403.500" y="191.500" width="3" height="3"/><rect x="409.500" y="191.500" width="3" height="3"/><path d="M429 185.500h14M429 188.500h14M429 191.500h14M429 194.500h14"/><rect x="456.500" y="185.500" width="15" height="10"/><path d="M461.500 186v9M466.500 186v9"/>
<path d="M496.500 185.500h14M496.500 188.500h14" stroke-dasharray="3 1"/><path d="M496.500 191.500h14M496.500 194.500h14" stroke-dasharray="3 1"/><path d="M515 188l3 3 3-3"/></g>
<path d="M583 185h5l1.500 2h7.500v10h-14z" fill="#5cb8ee"/><circle cx="590" cy="191.500" r="3" fill="#2f8fd0"/><path d="M590 189.500v3m-1.300-1.300l1.300 1.500 1.300-1.500" stroke="#fff" fill="none" stroke-width=".8"/>
<text x="603" y="195" font-size="13" fill="#a8a8a8" textLength="67" lengthAdjust="spacingAndGlyphs">Downloads</text>
<path d="M774 188l3-3 3 3M774 193l3 3 3-3" fill="none" stroke="#aaa"/>
<circle cx="875" cy="189" r="4.500" fill="none" stroke="#aaa" stroke-width="1.100"/><path d="M878.500 192.500l3 4" stroke="#aaa" stroke-width="1.100"/>
<text x="888" y="195" font-size="13" fill="#bbb" textLength="42" lengthAdjust="spacingAndGlyphs">Search</text>
<rect x="324" y="211" width="712" height="1" fill="#d6d6d6"/>
<rect x="324" y="502" width="712" height="1.500" fill="#d4d4d4"/>
<g fill="#fff" stroke="#c0c0c0">
<rect x="332.500" y="512.500" width="96" height="20" rx="3.500"/>
<rect x="864.500" y="512.500" width="77" height="20" rx="3.500"/>
<rect x="950.500" y="512.500" width="78" height="20" rx="3.500"/>
</g>
<g font-size="13" fill="#1a1a1a"><text x="346" y="527" textLength="68" lengthAdjust="spacingAndGlyphs">New Folder</text><text x="882" y="527" textLength="42" lengthAdjust="spacingAndGlyphs">Cancel</text><text x="974" y="527" textLength="30" lengthAdjust="spacingAndGlyphs">Save</text></g>
</g>
</svg>
<div id="wheel"></div>
<svg width="1358" height="857" viewBox="0 0 1358 857" xmlns="http://www.w3.org/2000/svg" style="pointer-events:none">
<defs>
<linearGradient id="lv" x1="0" y1="188" x2="0" y2="295" gradientUnits="userSpaceOnUse"><stop offset="0" stop-color="#111"/><stop offset="1" stop-color="#fff"/></linearGradient>
<linearGradient id="lh" x1="1160" y1="0" x2="1252" y2="0" gradientUnits="userSpaceOnUse"><stop offset="0" stop-color="#e3001e" stop-opacity="0"/><stop offset=".5" stop-color="#e3001e" stop-opacity=".55"/><stop offset=".85" stop-color="#e3001e" stop-opacity=".95"/><stop offset="1" stop-color="#e3001e"/></linearGradient>
</defs>
<polygon points="1160,188 1252,241 1160,295" fill="url(#lv)"/>
<polygon points="1160,188 1252,241 1160,295" fill="url(#lh)"/>
<circle cx="1260" cy="241" r="4.200" fill="#e3001e" stroke="#fff" stroke-width="1.200"/>
<circle cx="1160" cy="287" r="4.800" fill="#ebebeb" stroke="#333" stroke-width=".8"/>
</svg>
</body></html>
